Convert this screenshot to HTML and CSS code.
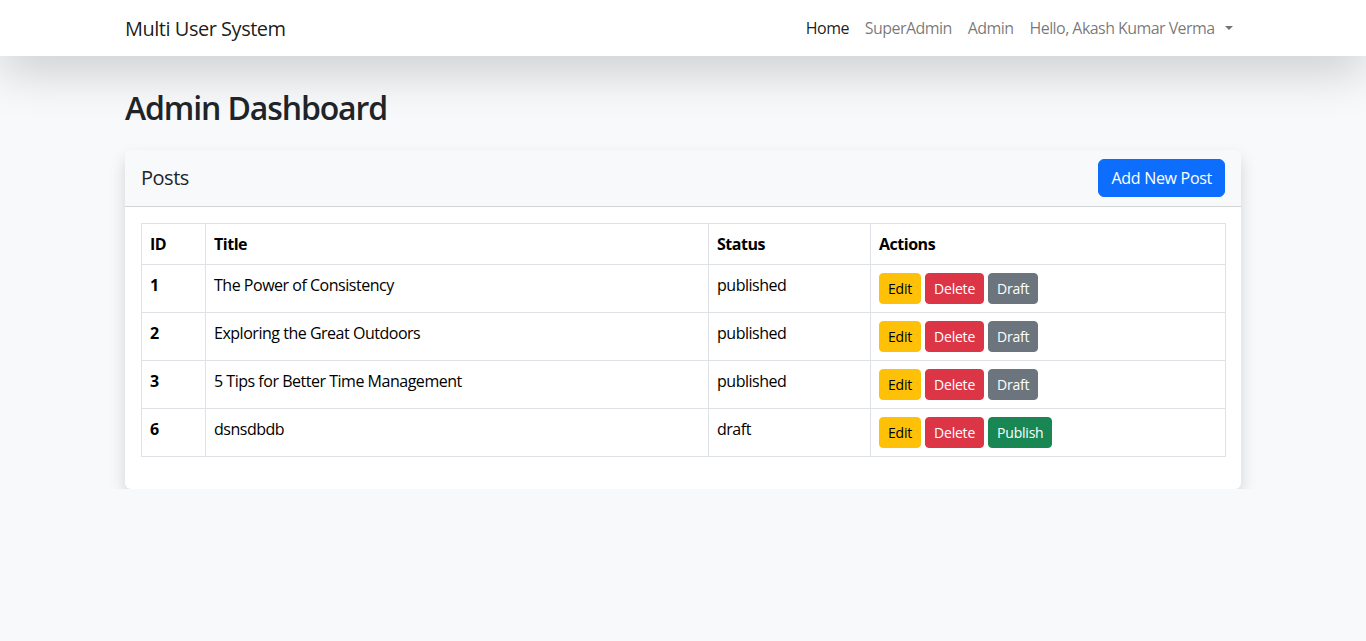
FILE: index.html
```html
<!DOCTYPE html>
<html lang="en">
<head>
<meta charset="utf-8">
<title>Admin Dashboard</title>
<link rel="stylesheet" href="styles.css">
</head>
<body>
<nav class="navbar">
  <div class="container nav-inner">
    <a class="brand" href="#">Multi User System</a>
    <ul class="nav-links">
      <li><a class="nav-link active" href="#">Home</a></li>
      <li><a class="nav-link" href="#">SuperAdmin</a></li>
      <li><a class="nav-link" href="#">Admin</a></li>
      <li><a class="nav-link dropdown-toggle" href="#">Hello, Akash Kumar Verma</a></li>
    </ul>
  </div>
</nav>

<main class="container main">
  <h2 class="page-title">Admin Dashboard</h2>

  <section class="card">
    <div class="card-header">
      <h5 class="card-title">Posts</h5>
      <a class="btn btn-primary" href="#">Add New Post</a>
    </div>
    <div class="card-body">
      <table class="table">
        <colgroup>
          <col class="col-id">
          <col class="col-title">
          <col class="col-status">
          <col class="col-actions">
        </colgroup>
        <thead>
          <tr><th>ID</th><th>Title</th><th>Status</th><th>Actions</th></tr>
        </thead>
        <tbody>
          <tr>
            <th>1</th><td>The Power of Consistency</td><td>published</td>
            <td><div class="actions"><a class="btn-sm warning" href="#">Edit</a><a class="btn-sm danger" href="#">Delete</a><a class="btn-sm secondary" href="#">Draft</a></div></td>
          </tr>
          <tr>
            <th>2</th><td>Exploring the Great Outdoors</td><td>published</td>
            <td><div class="actions"><a class="btn-sm warning" href="#">Edit</a><a class="btn-sm danger" href="#">Delete</a><a class="btn-sm secondary" href="#">Draft</a></div></td>
          </tr>
          <tr>
            <th>3</th><td>5 Tips for Better Time Management</td><td>published</td>
            <td><div class="actions"><a class="btn-sm warning" href="#">Edit</a><a class="btn-sm danger" href="#">Delete</a><a class="btn-sm secondary" href="#">Draft</a></div></td>
          </tr>
          <tr>
            <th>6</th><td>dsnsdbdb</td><td>draft</td>
            <td><div class="actions"><a class="btn-sm warning" href="#">Edit</a><a class="btn-sm danger" href="#">Delete</a><a class="btn-sm success" href="#">Publish</a></div></td>
          </tr>
        </tbody>
      </table>
    </div>
  </section>
</main>
</body>
</html>
```
FILE: styles.css
```css
* { box-sizing: border-box; }

body {
  margin: 0;
  background: #f8f9fa;
  color: #212529;
  font-family: "Open Sans", "Noto Sans", sans-serif;
  font-size: 16px;
  line-height: 1.5;
  letter-spacing: -0.03em;
}

a { text-decoration: none; }

.container {
  width: 1140px;
  margin: 0 auto;
  padding: 0 12px;
}

/* Navbar */
.navbar {
  background: #fff;
  height: 56px;
  box-shadow: 0 1rem 3rem rgba(0, 0, 0, 0.175);
  position: relative;
  z-index: 1;
}

.nav-inner {
  height: 56px;
  display: flex;
  align-items: center;
  justify-content: space-between;
}

.brand {
  color: rgba(0, 0, 0, 0.9);
  font-size: 20px;
  line-height: 30px;
  padding: 6px 0 4px;
}

.nav-links {
  display: flex;
  list-style: none;
  margin: 0;
  padding: 0;
}

.nav-link {
  display: block;
  padding: 8px;
  color: rgba(0, 0, 0, 0.55);
  line-height: 24px;
  letter-spacing: -0.035em;
}

.nav-link.active { color: rgba(0, 0, 0, 0.9); }

.dropdown-toggle::after {
  content: "";
  display: inline-block;
  margin-left: 0.65em;
  vertical-align: 0.255em;
  border-top: 0.3em solid;
  border-right: 0.3em solid transparent;
  border-left: 0.3em solid transparent;
  border-bottom: 0;
}

/* Main */
.main { padding-top: 33px; }

.page-title {
  margin: 0 0 23px;
  font-size: 32px;
  font-weight: 600;
  line-height: 38px;
  letter-spacing: -0.035em;
}

.card {
  background: #fff;
  border-radius: 6px;
  box-shadow: 0 0.5rem 1rem rgba(0, 0, 0, 0.15);
}

.card-header {
  display: flex;
  align-items: center;
  justify-content: space-between;
  padding: 9px 16px;
  background: #f8f9fa;
  border-bottom: 1px solid #d3d4d5;
  border-radius: 6px 6px 0 0;
}

.card-title {
  margin: 0;
  font-size: 20px;
  font-weight: 500;
  line-height: 24px;
}

.btn {
  display: inline-block;
  padding: 6px 12px;
  font-size: 16px;
  line-height: 24px;
  letter-spacing: -0.018em;
  border: 1px solid transparent;
  border-radius: 6px;
}

.btn-primary {
  background: #0d6efd;
  border-color: #0d6efd;
  color: #fff;
}

.card-body { padding: 16px; }

/* Table */
.table {
  width: 100%;
  margin: 0 0 16px;
  border-collapse: collapse;
  table-layout: fixed;
  color: #000;
}

.col-id { width: 64px; }
.col-title { width: 503px; }
.col-status { width: 162px; }
.col-actions { width: 355px; }

.table th,
.table td {
  padding: 8px;
  border: 1px solid #dee2e6;
  text-align: left;
  vertical-align: top;
  line-height: 24px;
}

.table th { font-weight: 700; }

.actions {
  display: flex;
  gap: 4px;
}

.btn-sm {
  display: inline-block;
  padding: 4px 8px;
  font-size: 14px;
  line-height: 21px;
  letter-spacing: -0.015em;
  border: 1px solid transparent;
  border-radius: 4px;
  color: #fff;
}

.warning { background: #ffc107; border-color: #ffc107; color: #000; }
.danger { background: #dc3545; border-color: #dc3545; }
.secondary { background: #6c757d; border-color: #6c757d; }
.success { background: #198754; border-color: #198754; }
```
